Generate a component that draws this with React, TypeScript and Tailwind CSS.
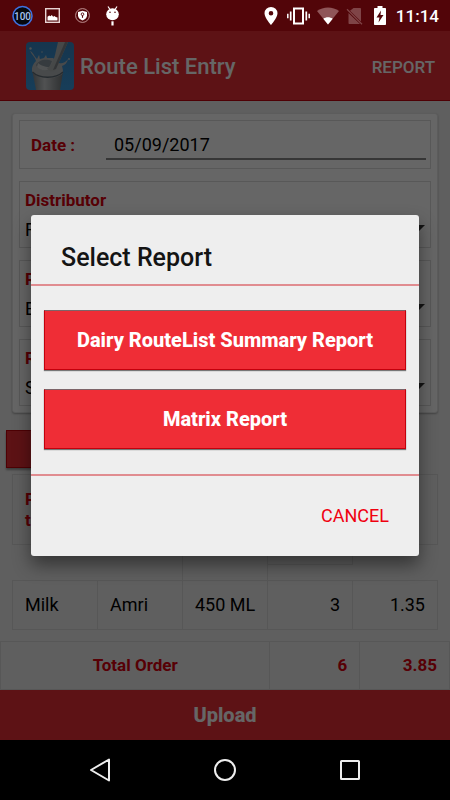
import type { ReactNode } from "react";

const fields = [
  { id: "distributor", label: "Distributor", value: "Rajesh" },
  { id: "route", label: "Route", value: "East" },
  { id: "retailer", label: "Retailer", value: "Shop" },
];

const StatusBar = () => (
  <div className="flex h-[31px] items-center bg-[#520509] pl-3 pr-[10px] text-white">
    <svg width="21" height="22" viewBox="0 0 21 22" className="mr-3">
      <circle cx="10.5" cy="11" r="9.5" fill="#06090f" stroke="#3f72e0" strokeWidth="1.6" />
      <text x="10.5" y="15" textAnchor="middle" fontSize="10" fontWeight="500" fontFamily="Roboto, sans-serif" fill="#a9c4ee">
        100
      </text>
    </svg>
    <svg width="15" height="15" viewBox="0 0 15 15" className="mr-[15px]">
      <rect x="0.7" y="0.7" width="13.6" height="13.6" fill="none" stroke="#e8d4d4" strokeWidth="1.4" />
      <path d="M2.5 12.5V8.8l1.7-1.3 1.3.8 1.3-1.2 1.3 1.6 1.4-.7 1.2 1 1.8.5v3z" fill="#fff" />
    </svg>
    <svg width="15" height="15" viewBox="0 0 15 15" className="mr-4">
      <circle cx="7.5" cy="7.5" r="6.9" fill="none" stroke="#c9a0a0" strokeWidth="0.9" />
      <path d="M7.5 2.8l4.5 1.2v3.4c0 2.2-1.8 4-4.5 5-2.7-1-4.5-2.8-4.5-5V4z" fill="#fff" />
      <path d="M7.5 9.8V7.5" stroke="#520509" strokeWidth="1.1" />
      <circle cx="7.5" cy="6.2" r="1.3" fill="none" stroke="#520509" strokeWidth="0.9" />
    </svg>
    <svg width="13" height="20" viewBox="0 0 13 20">
      <path d="M2 .5l2 3M11 .5l-2 3" stroke="#fff" strokeWidth="1.2" />
      <ellipse cx="6.5" cy="8.2" rx="6.3" ry="6" fill="#fff" />
      <path d="M6.5 15.3v4.2" stroke="#fff" strokeWidth="2.2" />
      <circle cx="4" cy="6.3" r="0.8" fill="#520509" />
      <circle cx="9" cy="6.3" r="0.8" fill="#520509" />
    </svg>
    <svg width="14" height="18" viewBox="0 0 14 18" className="ml-auto mr-[9px]">
      <path d="M7 0a6.5 6.3 0 0 0-6.5 6.3C.5 11 7 18 7 18s6.5-7 6.5-11.7A6.5 6.3 0 0 0 7 0zm0 8.6a2.3 2.3 0 1 1 0-4.6 2.3 2.3 0 0 1 0 4.6z" fill="#fff" fillRule="evenodd" />
    </svg>
    <svg width="23" height="18" viewBox="0 0 23 18" className="mr-[7px]">
      <rect x="7" y="1.5" width="9" height="15" fill="none" stroke="#fff" strokeWidth="2" />
      <path d="M3.7 4.5v9M19.3 4.5v9" stroke="#fff" strokeWidth="1.7" />
      <path d="M.8 6.8v4.4M22.2 6.8v4.4" stroke="#fff" strokeWidth="1.5" />
    </svg>
    <svg width="22" height="18" viewBox="0 0 22 18" className="mr-[7px]">
      <path d="M11 17.5L0 4C6 -.8 16 -.8 22 4z" fill="#8f5558" />
      <path d="M11 17.5L6.3 11.7c2.7-2 6.7-2 9.4 0z" fill="#fff" />
    </svg>
    <svg width="17" height="18" viewBox="0 0 17 18" className="mr-[11px]">
      <path d="M7.5 1H14c.6 0 1 .4 1 1v12.5L4 3.8zM2.5 6L14 17H3.5c-.6 0-1-.4-1-1z" fill="#7f4447" />
      <path d="M1 2.2l15 15" stroke="#7f4447" strokeWidth="1.3" />
    </svg>
    <svg width="12" height="19" viewBox="0 0 12 19" className="mr-[10px]">
      <path d="M3.5 0h5v2H11c.6 0 1 .4 1 1v15c0 .6-.4 1-1 1H1c-.6 0-1-.4-1-1V3c0-.6.4-1 1-1h2.5z" fill="#fff" />
      <path d="M7 4.5L2.5 11.5h3L4.5 16.5 9.5 9h-3z" fill="#520509" />
    </svg>
    <span className="pt-px pr-px text-[17px] leading-none font-medium">11:14</span>
  </div>
);

const MilkIcon = () => (
  <svg width="48" height="48" viewBox="0 0 48 48" className="mr-[6px] rounded">
    <defs>
      <linearGradient id="sky" x1="0" y1="0" x2="0" y2="1">
        <stop offset="0" stopColor="#3886c2" />
        <stop offset="1" stopColor="#3a9ade" />
      </linearGradient>
      <linearGradient id="glass" x1="0" y1="0" x2="1" y2="0">
        <stop offset="0" stopColor="#7e8488" />
        <stop offset="0.4" stopColor="#c9cccd" />
        <stop offset="1" stopColor="#74797c" />
      </linearGradient>
    </defs>
    <rect width="48" height="48" fill="url(#sky)" />
    <path d="M6.5 30h30.500l-3 18H10z" fill="url(#glass)" />
    <path
      d="M6 29c-.5-4 1-7 4-10-1-4-4-6-6-10 3 1 4 5 7 8l2-4c1 2 0 3 1 4l4-1 2-3 1 3 6 0 6 5c3 1 6 0 9-4-1 4-3 6-6 7 1 4 2 7-1 9-7 4-21 4-27-1-1-1-2-2-2-3z"
      fill="#b4b9bb"
    />
    <path d="M10 23c2-4 7-6 13-5l3 1-4 9c-5 1-10-1-12-5z" fill="#87949d" />
    <path d="M11 25c3 3 7 4 11 3l1-3c-4 0-9-2-11-4z" fill="#c9cdcf" />
    <path d="M32 0h10L30 27c-2 4-8 3-9-1 5-2 6-6 8-13z" fill="#aeb3b5" />
    <path d="M39 0h3L30 27l-3 1z" fill="#80868a" />
    <path d="M6.500 30c7 7 23 7 30.500 0" fill="none" stroke="#606c76" strokeWidth="1.3" />
    <circle cx="4.5" cy="6.5" r="1.2" fill="#c6cacb" />
    <circle cx="43" cy="17" r="0.9" fill="#c6cacb" />
    <circle cx="16" cy="10" r="0.7" fill="#c6cacb" />
  </svg>
);

const Cell = ({ children, className = "" }: { children?: ReactNode; className?: string }) => (
  <td className={`border border-[#dadada] px-3 ${className}`}>{children}</td>
);

const ReportButton = ({ children }: { children: ReactNode }) => (
  <button
    type="button"
    className="h-[60px] w-full border border-[#c4000c] border-t-[#7d6468] bg-[#ef2d36] text-xl font-extrabold text-white shadow-[0_1px_1px_#777777]"
  >
    {children}
  </button>
);

const ReportDialog = () => (
  <div className="absolute inset-0 flex items-center bg-black/60 px-[31px]">
    <div
      role="dialog"
      aria-labelledby="dialog-title"
      className="w-full rounded-[3px] bg-[#eeeeee] shadow-[0_9px_18px_rgba(0,0,0,0.45)]"
    >
      <h2 id="dialog-title" className="border-b-2 border-[#e08c90] px-[30px] pt-[26px] pb-[10px] text-[25px] leading-[33px] font-medium text-[#141414]">
        Select Report
      </h2>
      <div className="flex flex-col gap-[19px] border-b-2 border-[#e08c90] px-[13px] pt-6 pb-[25px]">
        <ReportButton>Dairy RouteList Summary Report</ReportButton>
        <ReportButton>Matrix Report</ReportButton>
      </div>
      <div className="flex justify-end px-[30px] py-7">
        <button type="button" className="text-lg leading-6 text-[#f0000f]">
          CANCEL
        </button>
      </div>
    </div>
  </div>
);

export default function App() {
  return (
    <div className="flex min-h-screen flex-col bg-black font-[Roboto,sans-serif]">
      <StatusBar />
      <main className="relative flex flex-1 flex-col bg-[#eeeeee] text-lg text-black">
        <header className="flex h-[70px] items-center border-b border-[#c4000c] bg-[#e92d36] pr-[15px] pl-[26px] text-white">
          <MilkIcon />
          <h1 className="pt-1 text-[22px] font-medium">Route List Entry</h1>
          <button type="button" className="ml-auto pt-1 text-[17px] font-medium">
            REPORT
          </button>
        </header>

        <section className="mx-3 mt-3 flex flex-col gap-3 rounded-[3px] border border-[#e6e6e6] bg-white p-[6px] shadow-[0_1px_2px_#aaaaaa]">
          <div className="flex h-[49px] items-center border border-[#dddddd] pt-[2px] pr-1 pl-[11px]">
            <label htmlFor="date" className="w-[75px] text-[17px] font-bold text-[#d9000d]">
              Date :
            </label>
            <input
              id="date"
              defaultValue="05/09/2017"
              className="h-7 min-w-0 flex-1 border-b-2 border-[#888888] px-2"
            />
          </div>
          {fields.map((field) => (
            <div key={field.id} className="h-[67px] border border-[#dddddd] px-[5px] pt-1">
              <label htmlFor={field.id} className="block text-[17px] leading-7 font-bold text-[#d9000d]">
                {field.label}
              </label>
              <div className="flex items-center">
                <select id={field.id} className="h-8 flex-1 appearance-none">
                  <option>{field.value}</option>
                </select>
                <svg width="14" height="7" viewBox="0 0 14 7" className="mb-1">
                  <path d="M0 0h14L7 7z" fill="#333" />
                </svg>
              </div>
            </div>
          ))}
        </section>

        <button type="button" aria-label="Add item" className="mx-[6px] mt-[17px] h-[38px] w-1/2 border border-[#c4000c] bg-[#e92d36] shadow-[0_2px_2px_#999999]" />

        <div className="mx-3 mt-[6px]">
          <table className="w-full table-fixed border-collapse">
            <thead>
              <tr className="h-[70px] text-left text-[17px] leading-[21px] text-[#d9000d]">
                <th className="border border-[#dadada] pr-4 pl-3 wrap-anywhere">Product</th>
                <th className="border border-[#dadada]" />
                <th className="border border-[#dadada]" />
                <th className="border border-[#dadada]" />
                <th className="border border-[#dadada]" />
              </tr>
            </thead>
            <tbody>
              <tr className="h-9 align-top">
                <td />
                <td />
                <td className="border-x border-[#dadada]" />
                <td>
                  <div className="h-5 border-r border-b border-[#dadada]" />
                </td>
                <td />
              </tr>
              <tr className="h-[49px] whitespace-nowrap">
                <Cell>Milk</Cell>
                <Cell>Amri</Cell>
                <Cell>450 ML</Cell>
                <Cell className="text-right">3</Cell>
                <Cell className="text-right">1.35</Cell>
              </tr>
            </tbody>
          </table>
        </div>

        <table className="mt-[11px] w-full table-fixed border-collapse text-[17px] font-bold text-[#d9000d]">
          <tbody>
            <tr className="h-12">
              <Cell className="w-3/5 text-center">Total Order</Cell>
              <Cell className="w-1/5 text-right">6</Cell>
              <Cell className="w-1/5 text-right">3.85</Cell>
            </tr>
          </tbody>
        </table>

        <button type="button" className="min-h-[50px] flex-1 bg-[#e92d36] text-xl font-extrabold text-white">
          Upload
        </button>

        <ReportDialog />
      </main>

      <nav className="flex h-[60px] items-center justify-center gap-[103px] text-[#eeeeee]">
        <button type="button" aria-label="Back">
          <svg width="22" height="24" viewBox="0 0 22 24" fill="none" stroke="currentColor" strokeWidth="2" strokeLinejoin="round">
            <path d="M20 1.5v21L2 12z" />
          </svg>
        </button>
        <button type="button" aria-label="Home">
          <svg width="22" height="22" viewBox="0 0 22 22" fill="none" stroke="currentColor" strokeWidth="2">
            <circle cx="11" cy="11" r="10" />
          </svg>
        </button>
        <button type="button" aria-label="Recent apps">
          <svg width="22" height="22" viewBox="0 0 22 22" fill="none" stroke="currentColor" strokeWidth="2">
            <rect x="2" y="2" width="18" height="18" rx="0.5" />
          </svg>
        </button>
      </nav>
    </div>
  );
}
